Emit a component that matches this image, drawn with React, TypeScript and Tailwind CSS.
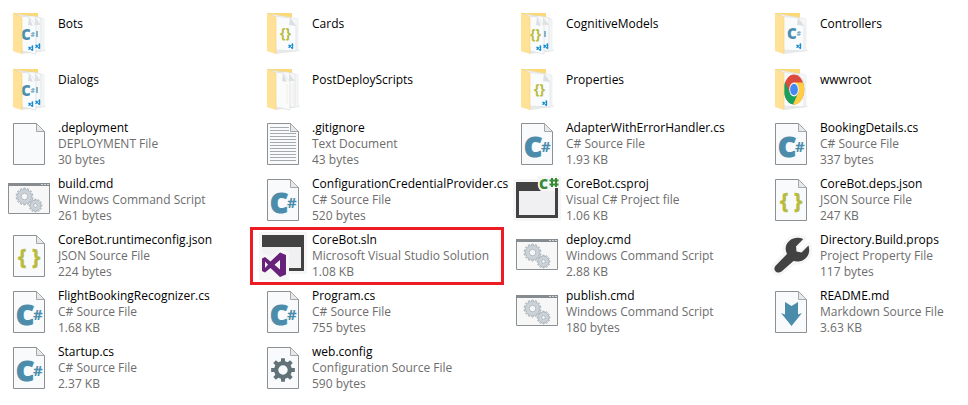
import type { ReactNode } from "react";

type IconKind =
  | "bots" | "cards" | "models" | "controllers" | "scripts" | "properties" | "web"
  | "blank" | "text" | "cs" | "json" | "config" | "markdown"
  | "cmd" | "csproj" | "sln" | "wrench";

interface Item {
  name: string;
  icon: IconKind;
  type?: string;
  size?: string;
  highlighted?: boolean;
}

const CS = "C# Source File";
const CMD = "Windows Command Script";
const JSON_FILE = "JSON Source File";

const items: Item[] = [
  { name: "Bots", icon: "bots" },
  { name: "Cards", icon: "cards" },
  { name: "CognitiveModels", icon: "models" },
  { name: "Controllers", icon: "controllers" },
  { name: "Dialogs", icon: "bots" },
  { name: "PostDeployScripts", icon: "scripts" },
  { name: "Properties", icon: "properties" },
  { name: "wwwroot", icon: "web" },
  { name: ".deployment", icon: "blank", type: "DEPLOYMENT File", size: "30 bytes" },
  { name: ".gitignore", icon: "text", type: "Text Document", size: "43 bytes" },
  { name: "AdapterWithErrorHandler.cs", icon: "cs", type: CS, size: "1.93 KB" },
  { name: "BookingDetails.cs", icon: "cs", type: CS, size: "337 bytes" },
  { name: "build.cmd", icon: "cmd", type: CMD, size: "261 bytes" },
  { name: "ConfigurationCredentialProvider.cs", icon: "cs", type: CS, size: "520 bytes" },
  { name: "CoreBot.csproj", icon: "csproj", type: "Visual C# Project file", size: "1.06 KB" },
  { name: "CoreBot.deps.json", icon: "json", type: JSON_FILE, size: "247 KB" },
  { name: "CoreBot.runtimeconfig.json", icon: "json", type: JSON_FILE, size: "224 bytes" },
  { name: "CoreBot.sln", icon: "sln", type: "Microsoft Visual Studio Solution", size: "1.08 KB", highlighted: true },
  { name: "deploy.cmd", icon: "cmd", type: CMD, size: "2.88 KB" },
  { name: "Directory.Build.props", icon: "wrench", type: "Project Property File", size: "117 bytes" },
  { name: "FlightBookingRecognizer.cs", icon: "cs", type: CS, size: "1.68 KB" },
  { name: "Program.cs", icon: "cs", type: CS, size: "755 bytes" },
  { name: "publish.cmd", icon: "cmd", type: CMD, size: "180 bytes" },
  { name: "README.md", icon: "markdown", type: "Markdown Source File", size: "3.63 KB" },
  { name: "Startup.cs", icon: "cs", type: CS, size: "2.37 KB" },
  { name: "web.config", icon: "config", type: "Configuration Source File", size: "590 bytes" },
];

// Closed outline of a cog with square teeth, plus its centre hole.
function gearPath(cx: number, cy: number, outer: number, inner: number, hole: number, teeth: number) {
  const step = (Math.PI * 2) / teeth;
  const at = (r: number, a: number) => `${(cx + r * Math.cos(a)).toFixed(2)} ${(cy + r * Math.sin(a)).toFixed(2)}`;
  const points: string[] = [];
  for (let i = 0; i < teeth; i++) {
    const a = i * step - Math.PI / 2;
    points.push(at(inner, a - step * 0.3), at(outer, a - step * 0.2), at(outer, a + step * 0.2), at(inner, a + step * 0.3));
  }
  return `M${points.join("L")}Z M${cx + hole} ${cy}a${hole} ${hole} 0 1 0 ${-2 * hole} 0a${hole} ${hole} 0 1 0 ${2 * hole} 0Z`;
}

function Svg({ children }: { children: ReactNode }) {
  return (
    <svg viewBox="0 0 48 48" className="size-12 shrink-0 overflow-visible font-['Open_Sans',sans-serif]" aria-hidden="true">
      {children}
    </svg>
  );
}

function Page({ children }: { children?: ReactNode }) {
  return (
    <Svg>
      <path d="M8.5 3.5H31.5L39.5 11.5V44.5H8.5Z" fill="#f8fafb" stroke="#8d9092" />
      <path d="M31.5 3.5V11.5H39.5Z" fill="#e6e8ea" stroke="#a5a8aa" />
      {children}
    </Svg>
  );
}

function CodeMark({ x, y }: { x: number; y: number }) {
  return (
    <path
      transform={`translate(${x} ${y})`}
      d="M0 2.3 1 1.5 3.2 2.4 4 0 5.2.7V5.6L4 6.3 2.6 4.3 1 5 0 4.2 1.2 3.2ZM4 2.4 2.6 3.2 4 4.3Z"
      fill="#158bd0"
      fillRule="evenodd"
    />
  );
}

function Folder({ pages, children }: { pages: 1 | 2; children?: ReactNode }) {
  return (
    <Svg>
      <path d="M8 43 18 46 42 42.500 38 41Z" fill="#e9eaeb" />
      <path d="M8 5H33V42H8Z" fill="#fbd978" />
      <path d="M11 6 37 10.500 39 11V43H17V9Z" fill="#f5f6f7" stroke="#dfe1e3" strokeWidth=".5" />
      {pages === 2 ? (
        <>
          <path d="M16 8H28L36 10V43H17Z" fill="#f7f8f9" stroke="#d9dcde" strokeWidth=".6" />
          <path d="M30 9V17H36Z" fill="#dfe1e3" />
          <path d="M14 8 24 9 31 18V46L17 43Z" fill="#fafbfc" stroke="#d5d8da" strokeWidth=".6" />
          <path d="M24 9 23 17 28 18Z" fill="#dcdfe1" />
        </>
      ) : (
        <>
          <path d="M13 8 31 10 37 18V43L17 42Z" fill="#fafbfc" stroke="#d9dcde" strokeWidth=".6" />
          <path d="M31 10 30 17 37 18Z" fill="#dcdfe1" />
        </>
      )}
      {children}
      <path d="M8 5 17 9.500V46L8 43Z" fill="#ffe197" />
      <path d="M8 5 17 9.500V46" fill="none" stroke="#f8d982" strokeWidth=".7" />
    </Svg>
  );
}

function FolderCs({ x, y }: { x: number; y: number }) {
  return (
    <text x={x} y={y} fontSize="15" fontWeight="800" fill="#4b8ead">
      C<tspan dy="-3" fontSize="6" fill="#83afc5">#</tspan>
    </text>
  );
}

function FolderBraces({ x, y }: { x: number; y: number }) {
  return (
    <text x={x} y={y} fontSize="14" fontWeight="700" fill="#b8bb40">{"{}"}</text>
  );
}

function FileIcon({ kind }: { kind: IconKind }) {
  switch (kind) {
    case "bots":
      return (
        <Folder pages={2}>
          <rect x="31" y="23" width="2" height="6" fill="#86b1c6" />
          <FolderCs x={16} y={32} />
          <CodeMark x={23} y={37} />
          <CodeMark x={30} y={35} />
        </Folder>
      );
    case "cards":
      return <Folder pages={1}><FolderBraces x={21} y={30} /><CodeMark x={29} y={35} /></Folder>;
    case "models":
      return (
        <Folder pages={2}>
          <rect x="31" y="23" width="2" height="6" fill="#86b1c6" />
          <FolderBraces x={17} y={31} />
          <CodeMark x={23} y={37} />
          <CodeMark x={30} y={35} />
        </Folder>
      );
    case "controllers":
      return <Folder pages={1}><FolderCs x={20} y={31} /><CodeMark x={29} y={35} /></Folder>;
    case "scripts":
      return (
        <Folder pages={2}>
          <path d="M28 20V40M34 19V39" stroke="#f4eee0" />
        </Folder>
      );
    case "properties":
      return <Folder pages={1}><FolderBraces x={21} y={30} /><CodeMark x={29} y={36} /></Folder>;
    case "web":
      return (
        <Folder pages={1}>
          <g transform="translate(27 25.500) scale(.68 1)">
            <circle r="15" fill="#dd4b3e" />
            <path d="M-6.100 3.500-13 -7.500A15 15 0 0 0 0 15L6.100 3.500Z" fill="#17a05e" />
            <path d="M0-7H13.300A15 15 0 0 1-1.500 15L6.100 3.500Z" fill="#ffce43" />
            <circle r="7" fill="#f5f7f8" />
            <circle r="5.700" fill="#4688f1" />
          </g>
        </Folder>
      );
    case "blank":
      return <Page />;
    case "text":
      return (
        <Page>
          <path
            d="M11 7.500H30M11 10.500H30M11 13.500H37M11 16.500H37M11 19.500H37M11 22.500H37M11 25.500H37M11 28.500H37M11 31.500H37M11 34.500H37M11 37.500H37M11 40.500H37"
            stroke="#a7aaac"
          />
        </Page>
      );
    case "cs":
      return (
        <Page>
          <text x="11" y="37" fontSize="28" fontWeight="800" fill="#4b8cab" stroke="#4b8cab" strokeWidth="1">C</text>
          <text x="28" y="32" fontSize="15" fontWeight="700" fill="#4b8cab">#</text>
        </Page>
      );
    case "json":
      return (
        <Page>
          <g fontSize="21" fontWeight="700" fill="#b8bb40" stroke="#b8bb40" strokeWidth=".5">
            <text x="13" y="32">{"{"}</text>
            <text x="27" y="32">{"}"}</text>
          </g>
        </Page>
      );
    case "config":
      return <Page><path d={gearPath(24, 26, 12, 9, 4.7, 8)} fill="#617378" fillRule="evenodd" /></Page>;
    case "markdown":
      return <Page><path d="M18 14 24.500 18 31 14V26.500L35 25 24.500 38 14 25 18 26.500Z" fill="#4b8cab" /></Page>;
    case "cmd":
      return (
        <Svg>
          <path d="M3.500 7.500H44.500V37.500H3.500Z" fill="#f7f7f7" stroke="#8b9094" />
          <path d="M3 7H45V10H3Z" fill="#868b90" />
          <path d="M36 8.500H38M39 8.500H41M42 8.500H44" stroke="#d2d5d7" />
          <g fill="#ccd4d9" stroke="#9da9b1" strokeWidth=".7" fillRule="evenodd">
            <path d={gearPath(19.5, 20.5, 8.5, 6.8, 3.3, 14)} />
            <path d={gearPath(30.5, 29.5, 6.5, 5, 1.8, 12)} />
          </g>
        </Svg>
      );
    case "csproj":
      return (
        <Svg>
          <path d="M0 3H24V0H48V45H0Z" fill="#f6f6f6" />
          <path d="M3 6H45V42H3Z" fill="#424242" />
          <path d="M6 15H42V39H6Z" fill="#f0eff1" />
          <path d="M27 0H48V12H42V15H28Q24 12 25 6Z" fill="#f6f6f6" />
          <path d="M42 12H45V15H42Z" fill="#424242" />
          <text x="26" y="13" fontSize="14" fontWeight="800" fill="#388a34">C</text>
          <path d="M39 2V11M43 2V11M36.500 4.500H45.500M36.500 8.500H45.500" stroke="#388a34" strokeWidth="2" />
        </Svg>
      );
    case "sln":
      return (
        <Svg>
          <path d="M0 0H48V42H30V48H0Z" fill="#f6f6f6" />
          <path d="M3 3H45V39H30V36H42V15H3Z" fill="#424242" />
          <path d="M3 15H42V36H30V20L22 17 11 24 3 20Z" fill="#f0eff1" />
          <path
            d="M21 20.500 27 23V42.500L21 45 11.500 36 6 40.500 3 39V26.500L6 25 11.500 29.500ZM21 28 15.500 32.800 21 37.500ZM6 29.500V36L9 32.800Z"
            fill="#68217a"
            fillRule="evenodd"
          />
        </Svg>
      );
    case "wrench": {
      const d =
        "M36.300 7 29 14.500 29.500 19.500 34.500 20.500 41.500 13.500C43.500 20 41 26 35.500 28.500C32 30 28.500 29.500 26.500 29L14.500 39.500C12 41.500 9.500 40.500 8.300 39C7 37.500 7 35.500 8.800 33.500L20 22C17.500 17 18.500 12 22.500 8.700C26.500 5.500 31.500 5 36.300 7Z";
      return (
        <Svg>
          <path d={d} fill="#f6f6f6" stroke="#f6f6f6" strokeWidth="6" strokeLinejoin="round" />
          <path d={d} fill="#424242" />
        </Svg>
      );
    }
  }
}

function Tile({ item }: { item: Item }) {
  return (
    <li className="relative flex h-14 min-w-0 items-center gap-[5px] pl-[5px]">
      <FileIcon kind={item.icon} />
      {item.type ? (
        <div className="whitespace-nowrap text-[#6d6d6d]">
          <p className="text-black">{item.name}</p>
          <p>{item.type}</p>
          <p>{item.size}</p>
        </div>
      ) : (
        <p className="whitespace-nowrap pb-4 text-black">{item.name}</p>
      )}
      {item.highlighted && (
        <span className="pointer-events-none absolute -inset-y-px -left-1 right-1 border-3 border-[#ed1c24]" />
      )}
    </li>
  );
}

export default function App() {
  return (
    <main className="min-h-screen bg-white pt-1 font-['Open_Sans','Noto_Sans',sans-serif] text-xs leading-4">
      <ul className="grid grid-cols-1 sm:grid-cols-2 md:grid-cols-[254fr_254fr_254fr_206fr]">
        {items.map((item) => (
          <Tile key={item.name} item={item} />
        ))}
      </ul>
    </main>
  );
}
